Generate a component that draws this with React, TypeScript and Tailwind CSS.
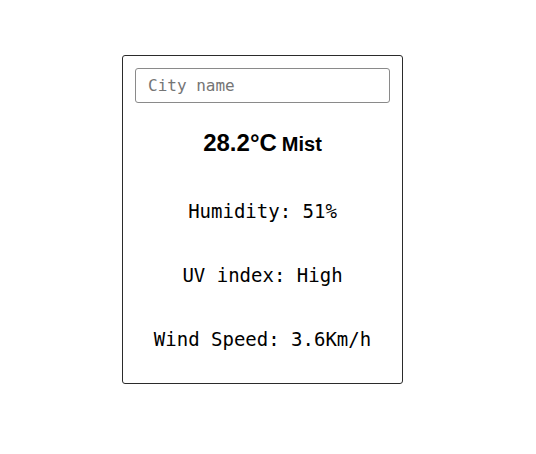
import React from 'react'

function Stat({ label, value }: { label: string; value: string }) {
  return (
    <p className="text-[19px] leading-[28px] text-black text-center">
      {label}: {value}
    </p>
  )
}

export default function App() {
  return (
    <div className="min-h-[454px] bg-white pt-[55px] pl-[122px]">
      <div className="w-[281px] h-[329px] border border-[#2b2b2b] rounded-[3px] p-3 flex flex-col font-['DejaVu_Sans_Mono',monospace]">
        <input
          type="text"
          placeholder="City name"
          className="w-full h-[35px] border border-[#8a8a8a] rounded-[3px] px-3 text-[16px] text-black placeholder:text-[#757575] outline-none"
        />
        <div className="mt-6 flex items-baseline justify-center gap-[5px] font-['Liberation_Sans',Arial,sans-serif] font-bold text-black">
          <span className="text-[24px] leading-8">28.2°C</span>
          <span className="text-[20px] leading-8">Mist</span>
        </div>
        <div className="mt-[37px] flex flex-col gap-9">
          <Stat label="Humidity" value="51%" />
          <Stat label="UV index" value="High" />
          <Stat label="Wind Speed" value="3.6Km/h" />
        </div>
      </div>
    </div>
  )
}
